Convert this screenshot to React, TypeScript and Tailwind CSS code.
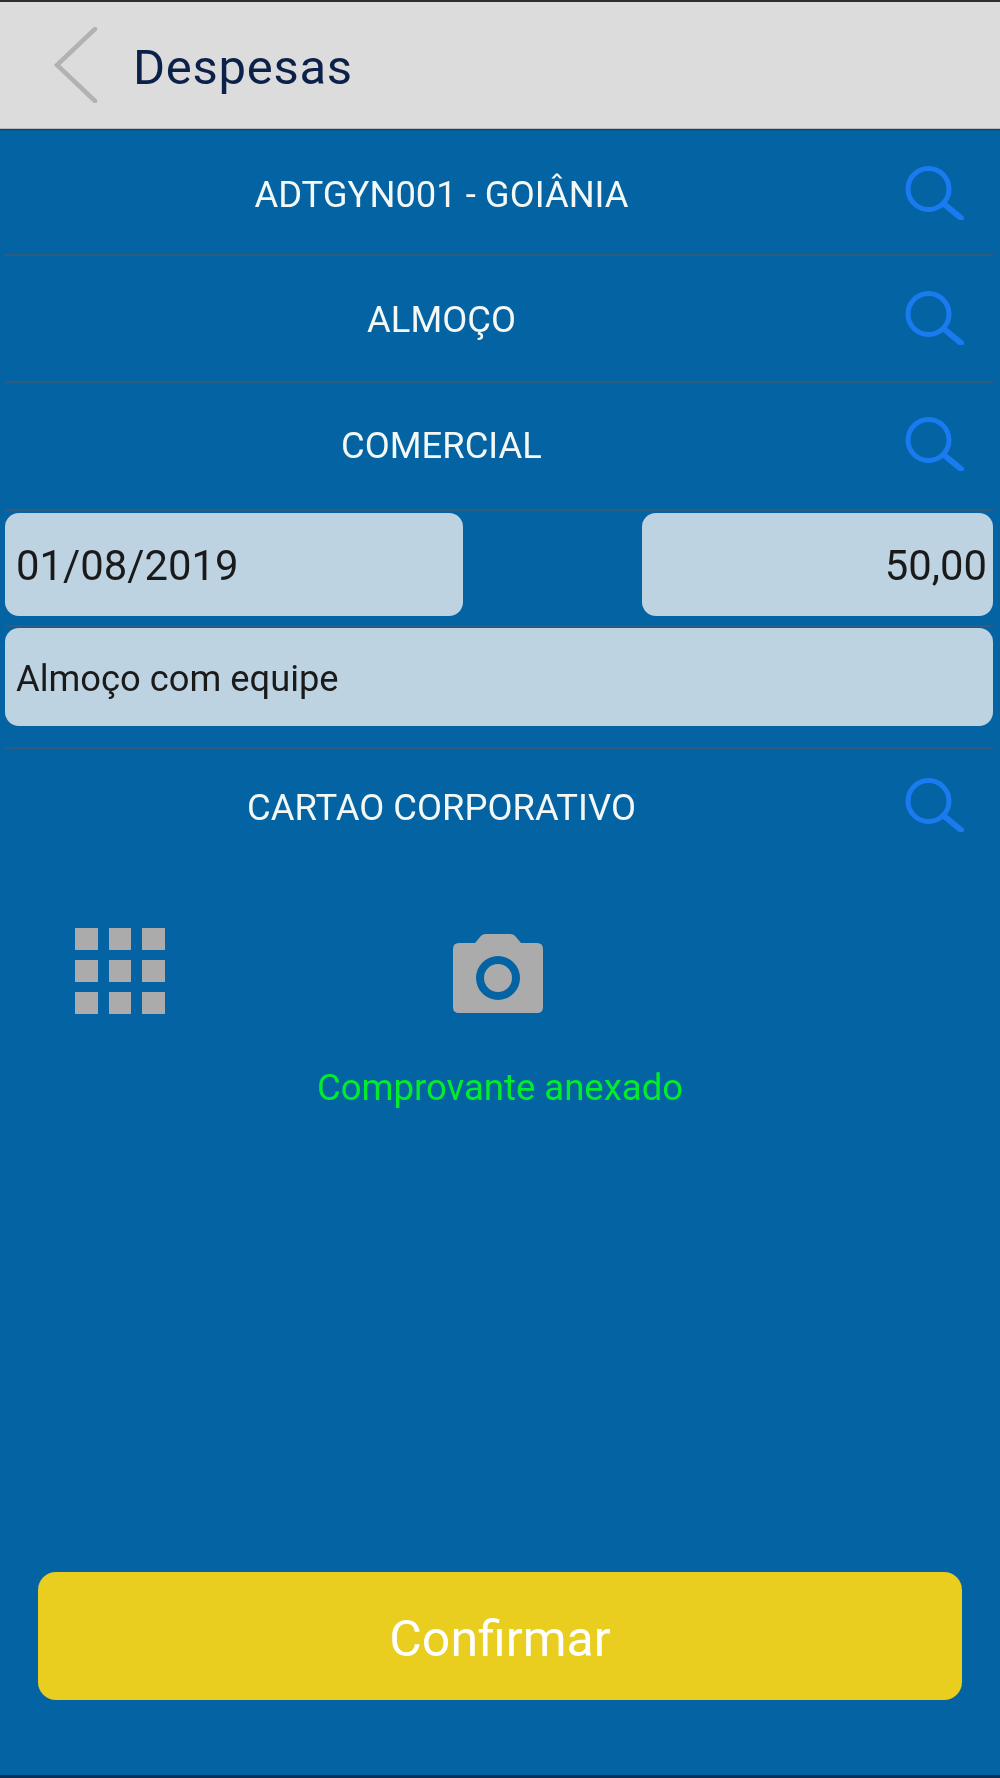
const font = { fontFamily: 'Roboto, "Liberation Sans", sans-serif' };

function SearchIcon() {
  return (
    <svg width="60" height="56" viewBox="0 0 60 56" fill="none" stroke="#1a7bf0" strokeLinecap="round" className="shrink-0">
      <circle cx="24.5" cy="25" r="20.5" strokeWidth="5" />
      <path d="M40 40 L57 54" strokeWidth="6" />
    </svg>
  );
}

function PickerRow({ label, height, offset, iconOffset }: { label: string; height: string; offset: string; iconOffset: string }) {
  return (
    <div className={`mx-[5px] w-[988px] flex items-center ${height} border-b-2 border-[#315c80]`}>
      <div className={`w-[873px] text-center text-[36.4px] text-[#f4f8f4] ${offset}`}>{label}</div>
      <div className={`ml-[26px] ${iconOffset}`}>
        <SearchIcon />
      </div>
    </div>
  );
}

function GridIcon() {
  const cells = [0, 1, 2, 3, 4, 5, 6, 7, 8];
  return (
    <div className="grid grid-cols-3 gap-x-[11px] gap-y-[10px] w-[90px]">
      {cells.map((c) => (
        <div key={c} className="h-[22px] bg-[#ababab]" />
      ))}
    </div>
  );
}

function CameraIcon() {
  return (
    <svg width="90" height="80" viewBox="0 0 90 80">
      <path
        fillRule="evenodd"
        fill="#ababab"
        d="M6 9 H22 L27 3 Q29 0 33 0 H57 Q61 0 63 3 L68 9 H84 Q90 9 90 15 V73 Q90 79 84 79 H6 Q0 79 0 73 V15 Q0 9 6 9 Z M45 22 A22 22 0 1 0 45 66 A22 22 0 1 0 45 22 Z M45 30 A14 14 0 1 1 45 58 A14 14 0 1 1 45 30 Z"
      />
    </svg>
  );
}

export default function App() {
  return (
    <div
      className="w-[1000px] h-[1778px] flex flex-col bg-[#0463a3] border-t-2 border-b-[3px] border-t-[#2e2e2e] border-b-[#05305a] overflow-hidden blur-[0.5px]"
      style={font}
    >
      <header className="h-[127px] shrink-0 flex items-center bg-[#dcdcdc] border-b border-[#b9b9b9] shadow-[0_1px_1px_#0a4577]">
        <svg width="44" height="76" viewBox="0 0 44 76" fill="none" stroke="#b2b2b2" strokeWidth="4.5" strokeLinecap="round" className="ml-[54px] shrink-0">
          <path d="M41 2 L3 38 L41 74" />
        </svg>
        <h1 className="ml-[35px] pt-[6px] text-[49px] font-normal text-[#0c2149] tracking-[0.7px]">Despesas</h1>
      </header>

      <PickerRow label="ADTGYN001 - GOIÂNIA" height="h-[127px]" offset="pt-[8px]" iconOffset="mb-0" />
      <PickerRow label="ALMOÇO" height="h-[127px]" offset="pt-[4px]" iconOffset="mb-[4px]" />
      <PickerRow label="COMERCIAL" height="h-[128px]" offset="pt-0" iconOffset="mb-[6px]" />

      <div className="mx-[5px] w-[988px] h-[116px] pt-[2px] flex justify-between border-b-2 border-[#315c80]">
        <div className="w-[458px] h-[103px] flex items-center pl-[11px] pt-[3px] rounded-[14px] bg-[#bdd3e2] text-[41.8px] text-[#1a1a1a]">
          01/08/2019
        </div>
        <div className="w-[351px] h-[103px] flex items-center justify-end pr-[6px] pt-[3px] rounded-[14px] bg-[#bdd3e2] text-[41.8px] text-[#1a1a1a]">
          50,00
        </div>
      </div>

      <div className="mx-[5px] w-[988px] h-[122px] pt-px border-b-2 border-[#315c80]">
        <div className="h-[98px] flex items-center pl-[11px] pt-[5px] rounded-[14px] bg-[#bdd3e2] text-[36.3px] text-[#1a1a1a]">
          Almoço com equipe
        </div>
      </div>

      <div className="mx-[5px] w-[988px] h-[115px] flex items-center">
        <div className="w-[873px] pt-[4px] text-center text-[36.4px] text-[#f4f8f4]">CARTAO CORPORATIVO</div>
        <div className="ml-[26px] mb-[6px]">
          <SearchIcon />
        </div>
      </div>

      <div className="h-[150px] flex items-end pl-[75px]">
        <GridIcon />
        <div className="ml-[288px]">
          <CameraIcon />
        </div>
      </div>

      <div className="mt-[47px] text-center text-[36.5px] text-[#00ec2c]">Comprovante anexado</div>

      <div className="flex-1" />

      <button className="mx-[38px] mb-[75px] h-[128px] pt-[6px] shrink-0 rounded-[18px] bg-[#e9cd1f] text-[50px] text-white">
        Confirmar
      </button>
    </div>
  );
}
